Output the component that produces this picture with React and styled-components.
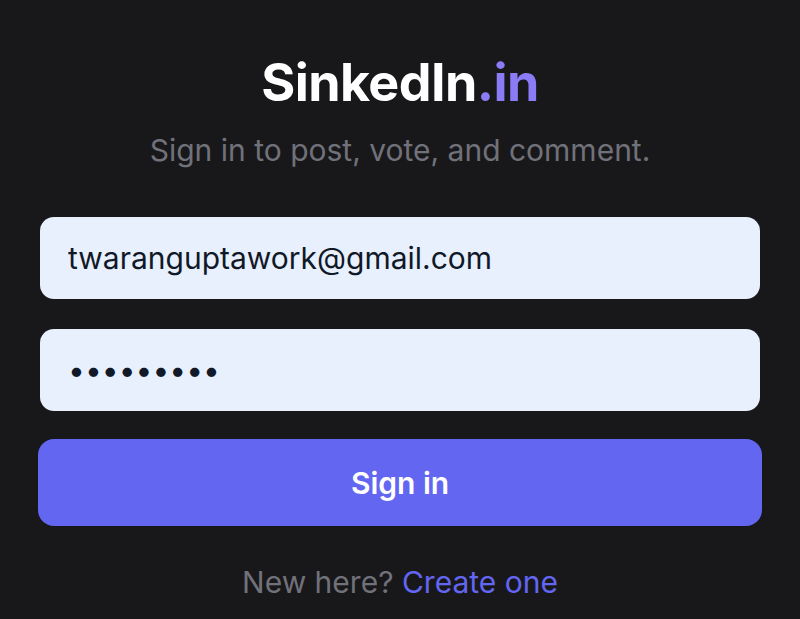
import React from "react";
import styled, { createGlobalStyle } from "styled-components";

const GlobalStyle = createGlobalStyle`
  html, body {
    margin: 0;
    padding: 0;
    background: #18181b;
  }
  body {
    font-family: Inter, "Noto Sans", sans-serif;
  }
`;

const Page = styled.div`
  min-height: 619px;
  background: #18181b;
  display: flex;
  flex-direction: column;
  align-items: center;
  padding: 53px 38px 0;
  box-sizing: border-box;
`;

const Title = styled.h1`
  margin: 0;
  font-size: 52px;
  font-weight: 700;
  letter-spacing: -0.6px;
  color: #ffffff;
  line-height: 60px;
  span {
    color: #8b7cf6;
  }
`;

const Subtitle = styled.p`
  margin: 19px 0 0;
  font-size: 30px;
  color: #71717a;
  line-height: 36px;
`;

const Form = styled.form`
  width: 100%;
  display: flex;
  flex-direction: column;
  margin-top: 49px;
`;

const Input = styled.input`
  box-sizing: border-box;
  width: calc(100% - 4px);
  margin: 0 2px ${({ $gap }) => $gap}px;
  height: 82px;
  border: none;
  outline: none;
  border-radius: 14px;
  background: #e8f0fe;
  padding: 0 28px;
  font-family: Inter, "Noto Sans", sans-serif;
  font-size: 30px;
  color: #111827;
  letter-spacing: 0;
`;

const Button = styled.button`
  height: 87px;
  border: none;
  border-radius: 16px;
  background: #6366f1;
  color: #ffffff;
  font-family: Inter, "Noto Sans", sans-serif;
  font-size: 30px;
  font-weight: 600;
  cursor: pointer;
`;

const Footer = styled.p`
  margin: 38px 0 0;
  font-size: 30px;
  line-height: 36px;
  color: #71717a;
  a {
    color: #6366f1;
    text-decoration: none;
  }
`;

export default function App() {
  return (
    <>
      <GlobalStyle />
      <Page>
        <Title>
          SinkedIn<span>.in</span>
        </Title>
        <Subtitle>Sign in to post, vote, and comment.</Subtitle>
        <Form onSubmit={(e) => e.preventDefault()}>
          <Input $gap={30} type="email" defaultValue="twaranguptawork@gmail.com" />
          <Input $gap={28} type="password" defaultValue="password1" />
          <Button type="submit">Sign in</Button>
        </Form>
        <Footer>
          New here? <a href="#">Create one</a>
        </Footer>
      </Page>
    </>
  );
}
